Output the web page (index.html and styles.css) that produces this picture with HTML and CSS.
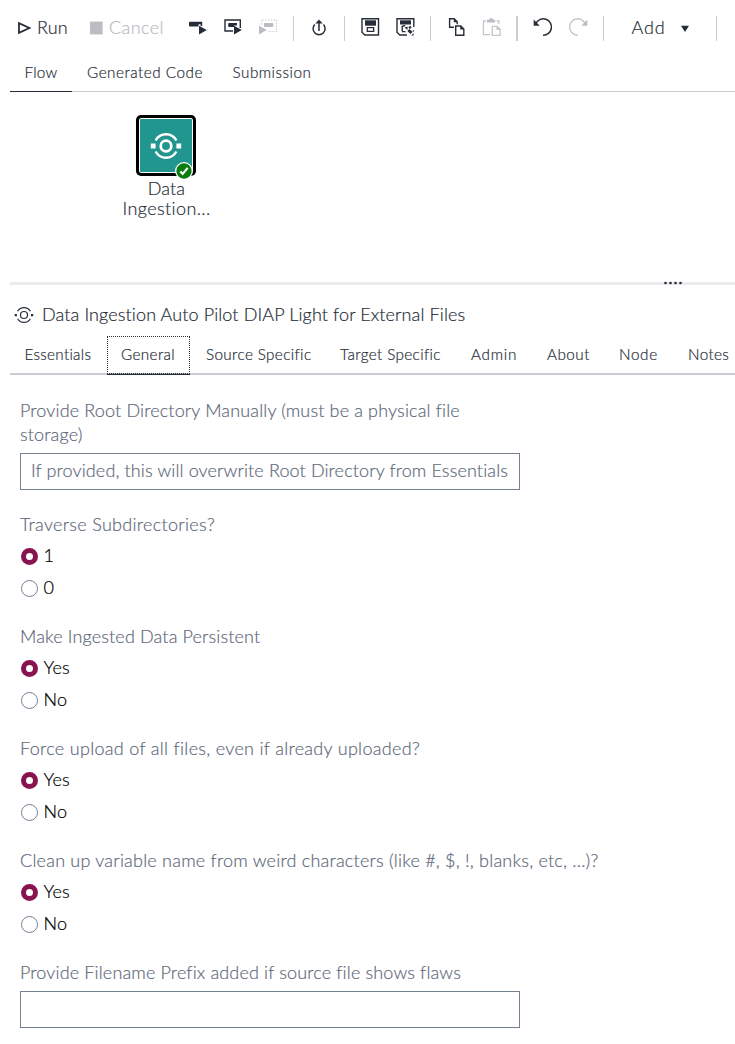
FILE: index.html
```html
<!DOCTYPE html>
<html lang="en">
<head>
<meta charset="utf-8">
<title>Data Ingestion Flow</title>
<link rel="stylesheet" href="styles.css">
</head>
<body>
<header class="toolbar">
  <button class="tool"><svg class="icon-sm" viewBox="0 0 14 14"><path d="M2 2.2v9.6L12.4 7z" fill="none" stroke="#262d38" stroke-width="1.8"/></svg><span class="run">Run</span></button>
  <button class="tool off"><svg class="icon-sm" viewBox="0 0 14 14"><path d="M1 .6h12.6v12.8H1z" fill="#bbbdc3"/></svg><span class="cancel">Cancel</span></button>
  <svg class="icon" viewBox="0 0 20 20"><path d="M1.800 3.700H14.200V8h-1.600V6.200h-2v1.600q0 .8-.8.8H1.800q-.8 0-.8-.8V4.500q0-.8.8-.8zM11 7.700v8.800l7.800-4.400z" fill="#262d38"/></svg>
  <svg class="icon" viewBox="0 0 20 20"><path d="M11 13H3V2h15.300v8" fill="none" stroke="#262d38" stroke-width="1.400"/><path d="M7 5H15v2.500h-3V9H7q-.8 0-.8-.8V5.800q0-.8.8-.8zM12 7.700v8.800l7.800-4.400z" fill="#262d38"/></svg>
  <svg class="icon" viewBox="0 0 20 20"><path d="M4.500 6.500V2h15v11.500h-9" fill="none" stroke="#c4c6ca" stroke-width="1.200" stroke-dasharray="1.300 1.500"/><path d="M7.800 5h7.700q.8 0 .8.800v2.400q0 .8-.8.800H7.800q-.8 0-.8-.800V5.800q0-.8.8-.8zM2 7.700v8.800l7.700-4.400z" fill="#bbbdc3"/></svg>
  <i class="sep"></i>
  <svg class="icon" viewBox="0 0 20 20"><path d="M10 13V4M5.700 6.600a6 6 0 1 0 8.800 0" fill="none" stroke="#262d38" stroke-width="1.500"/><path d="M6.300 5.600 10 1.600 13.700 5.600z" fill="#262d38"/></svg>
  <i class="sep"></i>
  <svg class="icon" viewBox="0 0 20 20"><path d="M2 .7h16.500v16.300H4.800L2 14.300z" fill="none" stroke="#262d38" stroke-width="1.400"/><path d="M5 2.300h11v5.400H5z" fill="#262d38"/><path d="M7.300 9.700h6.400v3.600H7.300z" fill="none" stroke="#262d38" stroke-width="1.300"/></svg>
  <svg class="icon" viewBox="0 0 20 20"><path d="M18.800 9V.7H2v13.600L4.800 17H12" fill="none" stroke="#262d38" stroke-width="1.400"/><path d="M5 2.300h11v4.200H5z" fill="#262d38"/><path d="M7.200 13.300V8.300l3-.8M7 13.600h3.500" fill="none" stroke="#262d38" stroke-width="1.400"/><path d="m9.500 9.300 3.300-.6-.5 3.300zM13.300 9.300l1.900-1.500 1.500 1.700-1.900 1.600zM12.300 12.900l2.200-1.900 3 3-2 1.900zM17.300 13l1.400-1.300v2.600zM16.200 17.600l2.400-2.400v2.400z" fill="#262d38"/></svg>
  <i class="sep"></i>
  <svg class="icon" viewBox="0 0 20 20"><path d="M8 9.300H3.600V.7h4.600l3 3v2.600M9.700 8h5.100l3 3v6.200H9.700z" fill="none" stroke="#262d38" stroke-width="1.400"/><path d="M7.800.5v3.700h3.800zM14.200 7.800v3.800h4z" fill="#262d38"/></svg>
  <svg class="icon" viewBox="0 0 20 20"><path d="M5 3H2.400v13.700H9M15.500 3h2.400v3.200M11.300 8.400h4.600l3.200 3v6H11.300z" fill="none" stroke="#c4c6ca" stroke-width="1.300"/><path d="M6 4.500V1.800h2L9 .3h2.300l1 1.500h2v2.700zM15.500 8v3.800h4z" fill="#bbbdc3"/></svg>
  <i class="sep thick"></i>
  <svg class="icon" viewBox="0 0 20 20"><path d="M4 5.200A8.200 8.200 0 1 1 11 17.200" fill="none" stroke="#262d38" stroke-width="1.500"/><path d="M1.700 1.500v6.300h6z" fill="#262d38"/></svg>
  <svg class="icon" viewBox="0 0 20 20"><path d="M17 5.200A8.200 8.200 0 1 0 10 17.200" fill="none" stroke="#c4c6ca" stroke-width="1.400"/><path d="M19.300 1.500v6.300h-6z" fill="#bbbdc3"/></svg>
  <i class="sep"></i>
  <button class="tool"><span class="add">Add</span></button>
  <svg class="caret" viewBox="0 0 10 8"><path d="M1 .8h8L5 7z" fill="#262d38"/></svg>
  <i class="sep"></i>
</header>

<nav class="tabs flow-tabs">
  <a class="tab active t-flow">Flow</a>
  <a class="tab t-code">Generated Code</a>
  <a class="tab t-sub">Submission</a>
</nav>

<section class="canvas">
  <div class="node">
    <div class="tile">
      <svg class="glyph" viewBox="0 0 32 28"><g fill="none" stroke="#fff"><circle cx="16" cy="14" r="5.300" stroke-width="2.700"/><path d="M5.600 8.500a11.800 11.800 0 0 1 20.800 0M5.600 19.500a11.800 11.800 0 0 0 20.800 0" stroke-width="2.300"/></g><path d="M.8 11.500h4.800v5H.8zM26.400 11.500h4.800v5h-4.800z" fill="#fff"/></svg>
      <svg class="badge" viewBox="0 0 18 18"><circle cx="9" cy="9" r="8.300" fill="#0b7c10" stroke="#fff" stroke-width="1.300"/><path d="m5.300 9.400 2.400 2.500 5-6" fill="none" stroke="#fff" stroke-width="2.200"/></svg>
    </div>
    <div class="caption"><span class="c1">Data</span><span class="c2">Ingestion...</span></div>
  </div>
</section>

<div class="splitter"><svg class="grip" viewBox="0 0 20 4"><g fill="#262d38"><circle cx="2.500" cy="2" r="1.350"/><circle cx="7.500" cy="2" r="1.350"/><circle cx="12.500" cy="2" r="1.350"/><circle cx="17.500" cy="2" r="1.350"/></g></svg></div>

<h1 class="title"><svg class="title-icon" viewBox="0 0 20 18"><g fill="none" stroke="#262d38" stroke-width="1.200"><circle cx="10" cy="9" r="3.500"/><path d="M3.600 5.300a7.400 7.400 0 0 1 12.800 0M3.600 12.700a7.400 7.400 0 0 0 12.800 0"/></g><path d="M.7 8h2.200v2.200H.7zM17 8h2.200v2.200H17z" fill="#262d38"/></svg><span class="title-text">Data Ingestion Auto Pilot DIAP Light for External Files</span></h1>

<nav class="tabs option-tabs">
  <a class="tab o1">Essentials</a>
  <a class="tab o2 focused">General</a>
  <a class="tab o3">Source Specific</a>
  <a class="tab o4">Target Specific</a>
  <a class="tab o5">Admin</a>
  <a class="tab o6">About</a>
  <a class="tab o7">Node</a>
  <a class="tab o8">Notes</a>
</nav>

<main class="form">
  <section class="group">
    <div class="label"><span class="l1">Provide Root Directory Manually (must be a physical file</span><br><span class="l1">storage)</span></div>
    <div class="field"><span class="hint">If provided, this will overwrite Root Directory from Essentials</span></div>
  </section>
  <section class="group">
    <div class="label"><span class="l2">Traverse Subdirectories?</span></div>
    <div class="choices">
      <div class="choice"><i class="radio on"></i><span>1</span></div>
      <div class="choice"><i class="radio"></i><span>0</span></div>
    </div>
  </section>
  <section class="group">
    <div class="label"><span class="l3">Make Ingested Data Persistent</span></div>
    <div class="choices">
      <div class="choice"><i class="radio on"></i><span>Yes</span></div>
      <div class="choice"><i class="radio"></i><span>No</span></div>
    </div>
  </section>
  <section class="group">
    <div class="label"><span class="l4">Force upload of all files, even if already uploaded?</span></div>
    <div class="choices">
      <div class="choice"><i class="radio on"></i><span>Yes</span></div>
      <div class="choice"><i class="radio"></i><span>No</span></div>
    </div>
  </section>
  <section class="group">
    <div class="label"><span class="l5">Clean up variable name from weird characters (like #, $, !, blanks, etc, ...)?</span></div>
    <div class="choices">
      <div class="choice"><i class="radio on"></i><span>Yes</span></div>
      <div class="choice"><i class="radio"></i><span>No</span></div>
    </div>
  </section>
  <section class="group">
    <div class="label"><span class="l6">Provide Filename Prefix added if source file shows flaws</span></div>
    <div class="field"></div>
  </section>
</main>
</body>
</html>
```
FILE: styles.css
```css
* { box-sizing: border-box; }
body {
  margin: 0;
  width: 735px;
  height: 1044px;
  overflow: hidden;
  background: #fff;
  color: #262d38;
  font-family: "Lato Light", Lato, "Open Sans", sans-serif;
  font-size: 18px;
  font-weight: 300;
  font-variant-ligatures: none;
  letter-spacing: 0.15px;
  white-space: nowrap;
  -webkit-text-stroke: 0.2px currentColor;
}
svg { display: block; overflow: visible; flex: none; }

.toolbar {
  display: grid;
  grid-template-columns: 72px 99px 34px 35px 36px 16px 35px 16px 35px 35px 16px 35px 35px 16px 36px 35px 28px 49px 36px 19px;
  align-items: center;
  height: 56px;
  padding-left: 17px;
}
.tool {
  display: flex;
  align-items: center;
  gap: 6px;
  height: 24px;
  padding: 0;
  border: 0;
  background: none;
  color: inherit;
  font: inherit;
  letter-spacing: inherit;
}
.tool span { margin-top: -2px; }
.tool.off { color: #b9bbc0; }
.cancel { letter-spacing: 0.4px; }
.add { padding-left: 0.5px; letter-spacing: 0.9px; }
.icon { width: 20px; height: 20px; }
.icon-sm { width: 14px; height: 14px; }
.caret { width: 10px; height: 8px; margin-top: 2px; }
.sep { width: 1px; height: 25px; background: #c9ccd2; }
.sep.thick { width: 2px; }

.tabs { display: flex; margin-left: 10px; font-size: 15.25px; letter-spacing: 0.38px; }
.tab { flex: none; padding-left: 15px; }
.flow-tabs { height: 36px; border-bottom: 1px solid #c9ccd2; line-height: 32px; }
.flow-tabs .tab { height: 36px; }
.flow-tabs .active { border-bottom: 1px solid #262d38; }
.t-flow { width: 62px; padding-left: 14.5px; letter-spacing: 0.27px; }
.t-code { width: 145px; letter-spacing: 0.52px; }
.t-sub { width: 110px; padding-left: 15.5px; letter-spacing: 0.52px; }

.canvas { height: 190px; padding: 23px 0 0 116px; }
.node { display: flex; flex-direction: column; align-items: center; width: 100px; }
.tile {
  position: relative;
  display: grid;
  place-items: center;
  width: 60px;
  height: 61px;
  border: 3px solid #000;
  border-radius: 5px;
  background: #21968f;
  box-shadow: inset 0 0 0 1px #fff;
}
.glyph { width: 32px; height: 28px; }
.badge { position: absolute; right: 0; bottom: -7px; width: 18px; height: 18px; }
.caption { display: flex; flex-direction: column; align-items: center; padding: 2px 0 0 1px; line-height: 20px; }
.c2 { letter-spacing: 0.4px; }

.splitter { display: flex; justify-content: flex-end; height: 3px; margin-left: 10px; padding-right: 52px; background: #e9ebed; }
.grip { width: 20px; height: 4px; margin-top: -1px; }

.title { display: flex; align-items: center; gap: 8px; height: 51px; margin: 0; padding: 9px 0 0 14px; font-size: 18px; font-weight: 300; line-height: 24px; }
.title-icon { width: 20px; height: 18px; }
.title-text { margin-top: -2px; letter-spacing: 0.12px; }

.option-tabs { height: 39px; border-bottom: 2px solid #c9ccd2; line-height: 37px; }
.option-tabs .tab { height: 39px; }
.option-tabs .focused { height: 38px; border: 1px dotted #262d38; padding-left: 13px; margin: 0 1px; line-height: 34px; box-shadow: 0 1px 0 #262d38; }
.option-tabs .o1 { width: 96px; padding-left: 14.5px; letter-spacing: 0.3px; }
.option-tabs .o2 { width: 83px; }
.o3 { width: 134px; }
.o4 { width: 131px; }
.o5 { width: 76px; letter-spacing: 0.75px; }
.o6 { width: 72px; letter-spacing: 0.5px; }
.o7 { width: 69px; letter-spacing: 0.65px; }
.o8 { width: 60px; }

.form { display: flex; flex-direction: column; gap: 21px; padding: 24px 0 0 20px; }
.group { width: 500px; }
.group:first-child { margin-bottom: 2px; }
.label { height: 24px; line-height: 24px; color: #5f6a7b; }
.label { margin-top: -1px; height: 25px; }
.group:first-child .label { height: 49px; }
.l1, .l3, .l6 { letter-spacing: 0.15px; }
.l2, .l4 { letter-spacing: 0.31px; }
.l5 { letter-spacing: 0.22px; }
.hint { letter-spacing: 0.13px; }
.field { display: flex; align-items: center; height: 37px; margin-top: 6px; padding: 0 0 4px 10px; border: 1px solid #768194; color: #5f6a7b; }
.choices { padding-top: 3px; color: #000; }
.choice { display: flex; align-items: center; gap: 5.5px; height: 32px; padding-left: 1px; }
.choice span { margin-top: -2px; }
.radio { flex: none; width: 17px; height: 17px; border: 1px solid #768194; border-radius: 50%; }
.radio.on { border: 5px solid #87144f; }
```
